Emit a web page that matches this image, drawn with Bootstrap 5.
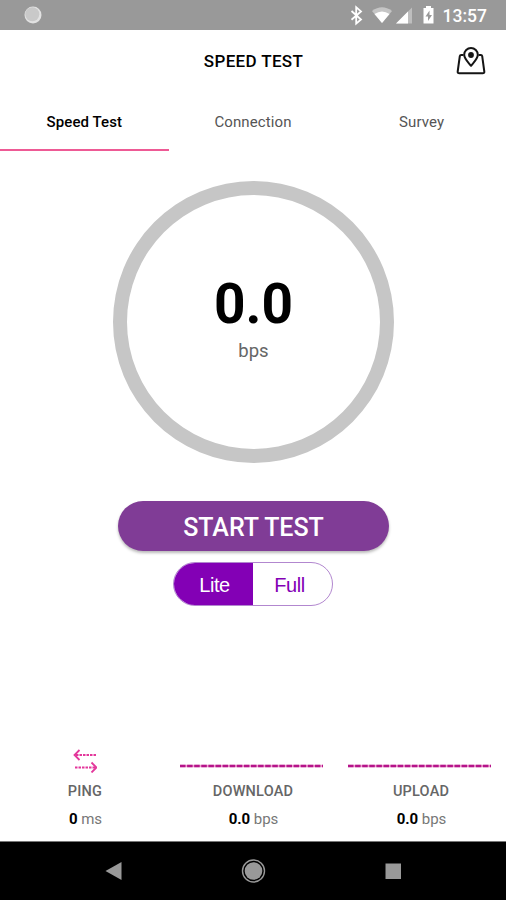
<!DOCTYPE html>
<html lang="en">
<head>
<meta charset="utf-8">
<meta name="viewport" content="width=device-width, initial-scale=1">
<title>Speed Test</title>
<link href="https://cdn.jsdelivr.net/npm/bootstrap@5.3.0/dist/css/bootstrap.min.css" rel="stylesheet">
<style>
body { font-family: Roboto, "Liberation Sans", sans-serif; height: 900px; color: #000; overflow: hidden; }
svg { display: block; flex: none; }
.status-bar { height: 30px; background: #999; padding: 0 19px 0 24px; }
.clock { font-size: 17.500px; font-weight: 500; line-height: 30px; padding: 2px 0 0 6px; }
.title-bar { height: 62px; display: grid; grid-template-columns: 1fr auto 1fr; padding: 0 20px; }
.title-bar h1 { font-size: 17px; font-weight: 500; letter-spacing: .35px; line-height: 20px; padding-left: 1px; }
.tabs .nav-link { height: 59px; padding: 1px 0 0; line-height: 58px; font-size: 15px; font-weight: 400; letter-spacing: .1px; color: #555; border-bottom: 2px solid transparent; }
.tabs .nav-link.active { color: #000; font-weight: 500; border-color: #ee5a95; }
.gauge { width: 281px; height: 282px; margin-top: 30px; border: 14px solid #c6c6c6; margin-left: 1px; }
.gauge-value { font-size: 55px; line-height: 60px; font-weight: 700; margin-top: -7px; }
.gauge-unit { font-size: 18.5px; line-height: 24px; margin-top: 5px; color: #666; }
.start { width: 271px; height: 50px; margin-top: 38px; padding: 3px 0 0 1px; background: #803c96; border: 0; font-size: 25px; line-height: 48px; font-weight: 500; box-shadow: 0 2px 3px rgba(0,0,0,.28); }
.mode { width: 160px; height: 44px; margin-top: 11px; border: 1px solid #b287cf; overflow: hidden; font-family: "Liberation Sans", sans-serif; }
.mode .btn { border: 0; border-radius: 0; padding: 0 0 0 2px; font-size: 20px; line-height: 44px; color: #8300b5; letter-spacing: -.4px; }
.mode .btn:last-child { padding: 0 6px 0 0; }
.mode .btn.active { background: #8300b5; color: #fff; }
.metrics { padding: 0 1px; height: 96px; font-size: 15px; }
.metric-graph { height: 28px; }
.metric-name { font-size: 14.5px; font-weight: 500; color: #666; line-height: 20px; margin-top: 9px; letter-spacing: .2px; }
.metric-value { font-size: 15px; line-height: 20px; margin-top: 7px; color: #777; letter-spacing: -.05px; padding-left: 1px; }
.metric-value b { color: #000; }
.nav-bar { height: 59px; background: #000; border-top: 1px solid #777; }
</style>
</head>
<body class="d-flex flex-column bg-white">
<header class="status-bar d-flex align-items-center text-white flex-shrink-0">
  <svg width="18" height="18" viewBox="0 0 18 18"><circle cx="9" cy="9" r="8.5" fill="#e2e2e2"/><circle cx="8.3" cy="8.2" r="7" fill="#c9c9c9"/></svg>
  <svg class="ms-auto" width="92" height="30" viewBox="345 0 92 30">
    <path d="M351.500 11l9.500 8.500-4.800 4.100V7.300l4.800 4.100-9.500 8.300" fill="none" stroke="#fff" stroke-width="1.8"/>
    <path d="M372 11q10-7.500 20 0L382 23z" fill="#c5c5c5"/><path d="M374.500 14q7.500-5 15 0L382 23z" fill="#fff"/>
    <path d="M412 7.500V23.500H396z" fill="#bebebe"/><path d="M408 11.500v12h-12z" fill="#fff"/>
    <path d="M426 6h5v2h2.500v15.500h-10V8h2.500z" fill="#fff"/><path d="M429.500 10.500l-4 6h2.500v4.500l4-6h-2.500z" fill="#999"/>
  </svg>
  <span class="clock">13:57</span>
</header>
<div class="title-bar align-items-center flex-shrink-0">
  <span></span>
  <h1 class="m-0">SPEED TEST</h1>
  <svg class="ms-auto" width="30" height="28" viewBox="0 0 30 28" fill="none" stroke="#151515" stroke-width="2" stroke-linejoin="round">
    <path d="M7.500 8H5.200Q4 8 3.800 9.200L1.700 24.500Q1.500 26.300 3.300 26.300H26.700Q28.500 26.300 28.300 24.500L26.200 9.200Q26 8 24.800 8H22.500"/>
    <path d="M15 18.800C12.500 15.500 8.200 12 8.200 7.800a6.800 6.800 0 0 1 13.600 0C21.800 12 17.500 15.500 15 18.800z"/><circle cx="15" cy="8" r="2.900" fill="#151515" stroke="none"/>
  </svg>
</div>
<ul class="tabs nav nav-fill row g-0 flex-shrink-0">
  <li class="col"><a class="nav-link active text-center" href="#">Speed Test</a></li>
  <li class="col"><a class="nav-link text-center" href="#">Connection</a></li>
  <li class="col"><a class="nav-link text-center" href="#">Survey</a></li>
</ul>
<main class="d-flex flex-column align-items-center flex-grow-1">
  <div class="gauge rounded-circle d-flex flex-column align-items-center justify-content-center">
    <div class="gauge-value">0.0</div>
    <div class="gauge-unit">bps</div>
  </div>
  <button class="start btn btn-primary rounded-pill" type="button">START TEST</button>
  <div class="mode d-flex rounded-pill">
    <button class="btn active w-50" type="button">Lite</button>
    <button class="btn w-50" type="button">Full</button>
  </div>
</main>
<section class="metrics row g-0 text-center flex-shrink-0">
  <div class="col">
    <div class="metric-graph d-flex justify-content-center"><svg width="24" height="28" viewBox="0 0 24 28" fill="none" stroke="#e3379b" stroke-width="1.800"><path d="M6.500 5L1.500 10l5 5"/><path d="M3 10h20" stroke-dasharray="2.500 1"/><path d="M18.500 17.500l5 5-5 5"/><path d="M2 22.500h20" stroke-dasharray="2.500 1"/></svg></div>
    <div class="metric-name">PING</div>
    <div class="metric-value"><b>0</b> ms</div>
  </div>
  <div class="col">
    <div class="metric-graph d-flex justify-content-center pe-1"><svg width="143" height="28" viewBox="0 0 143 28"><path d="M0 21h143" stroke="#efa0cf" stroke-width="2.600"/><path d="M0 21h143" stroke="#b5148a" stroke-width="2.600" stroke-dasharray="5.500 1.600"/></svg></div>
    <div class="metric-name">DOWNLOAD</div>
    <div class="metric-value"><b>0.0</b> bps</div>
  </div>
  <div class="col">
    <div class="metric-graph d-flex justify-content-center pe-1"><svg width="143" height="28" viewBox="0 0 143 28"><path d="M0 21h143" stroke="#efa0cf" stroke-width="2.600"/><path d="M0 21h143" stroke="#b5148a" stroke-width="2.600" stroke-dasharray="5.500 1.600"/></svg></div>
    <div class="metric-name">UPLOAD</div>
    <div class="metric-value"><b>0.0</b> bps</div>
  </div>
</section>
<footer class="nav-bar flex-shrink-0 d-flex justify-content-center">
  <svg width="300" height="58" viewBox="103 842 300 58" fill="#999"><path d="M105.500 871l16-9v18z"/><circle cx="253.500" cy="871" r="8.800"/><circle cx="253.500" cy="871" r="11" fill="none" stroke="#999" stroke-width="1.400"/><path d="M385.500 863.500H401V879h-15.500z"/></svg>
</footer>
<script src="https://cdn.jsdelivr.net/npm/bootstrap@5.3.0/dist/js/bootstrap.bundle.min.js"></script>
</body>
</html>
